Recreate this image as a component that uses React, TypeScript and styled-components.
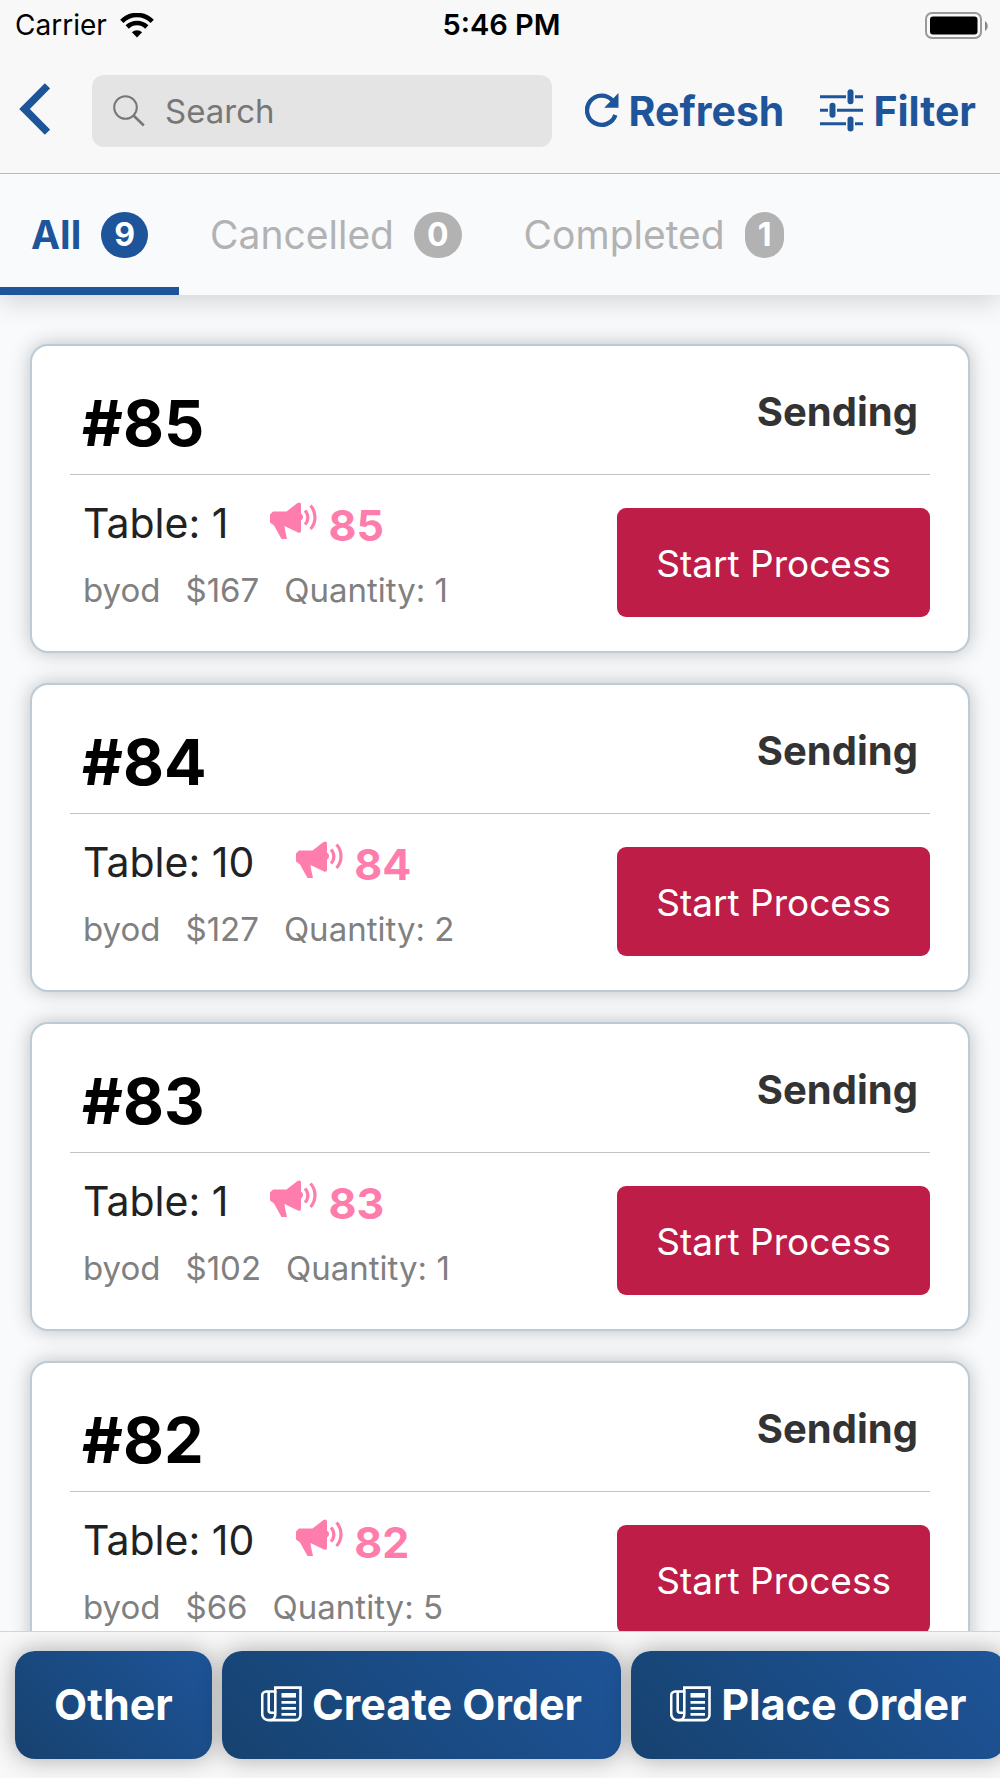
import React from "react";
import styled, { createGlobalStyle, css } from "styled-components";

const color = {
  brand: "#1e5499",
  crimson: "#bd1d46",
  pink: "#ff7dac",
  muted: "#b2b2b2",
  surface: "#f8f8f8",
  page: "#f8fafc",
};

const GlobalStyle = createGlobalStyle`
  *, *::before, *::after { box-sizing: border-box; }
  body {
    margin: 0;
    background: ${color.page};
    font-family: Inter, "Liberation Sans", sans-serif;
  }
  button, input { font: inherit; }
  button { border: 0; background: none; padding: 0; cursor: pointer; white-space: nowrap; }
  svg { display: block; flex: none; }
`;

const Screen = styled.div`
  display: flex;
  flex-direction: column;
  height: 100vh;
  overflow: hidden;
`;

const Header = styled.header`
  flex: none;
  background: ${color.surface};
  border-bottom: 1px solid #b9b9bb;
`;

const StatusBar = styled.div`
  display: grid;
  grid-template-columns: 1fr auto 1fr;
  align-items: center;
  height: 50px;
  padding: 0 12px 0 15px;
  font-size: 28px;
  line-height: 32px;
  color: #000;
`;

const Carrier = styled.div`
  display: flex;
  align-items: center;
  gap: 13px;
`;

const Clock = styled.time`
  font-size: 29px;
  font-weight: 600;
`;

const Battery = styled.div`
  justify-self: end;
`;

const Toolbar = styled.div`
  display: flex;
  align-items: center;
  gap: 33px;
  padding: 25px 24px 26px 19px;
`;

const Tools = styled.div`
  display: flex;
  gap: 36px;
`;

const BackButton = styled.button`
  margin: 0 9px 4px 0;
`;

const SearchBox = styled.label`
  display: flex;
  align-items: center;
  gap: 20px;
  flex: 1;
  min-width: 0;
  height: 72px;
  padding: 0 21px;
  border-radius: 12px;
  background: #e4e4e4;
  color: #777;
`;

const SearchInput = styled.input`
  flex: 1;
  min-width: 0;
  padding: 0;
  border: 0;
  outline: 0;
  background: transparent;
  font-size: 33px;
  line-height: 40px;
  color: #333;
  &::placeholder { color: #777; opacity: 1; }
`;

const ToolButton = styled.button`
  display: flex;
  align-items: center;
  gap: 10px;
  color: ${color.brand};
  font-size: 41px;
  line-height: 48px;
  font-weight: 700;
  svg { margin-bottom: 2px; }
`;

const Tabs = styled.nav`
  position: relative;
  z-index: 1;
  display: flex;
  flex: none;
  height: 121px;
  background: ${color.page};
  box-shadow: 0 8px 24px rgba(0, 0, 0, 0.14);
  clip-path: inset(0 0 -60px 0);
`;

const Tab = styled.button<{ $active?: boolean }>`
  display: flex;
  align-items: center;
  gap: 20px;
  padding: 8px 31px 0;
  border-bottom: 8px solid transparent;
  font-size: 39px;
  line-height: 46px;
  color: ${color.muted};
  ${(p) =>
    p.$active &&
    css`
      color: ${color.brand};
      font-weight: 700;
      border-bottom-color: ${color.brand};
    `}
`;

const Badge = styled.span<{ $active?: boolean }>`
  height: 46px;
  padding: 0 13px;
  border-radius: 23px;
  background: ${(p) => (p.$active ? color.brand : color.muted)};
  color: #fff;
  font-size: 32px;
  line-height: 46px;
  font-weight: 700;
`;

const OrderList = styled.main`
  display: flex;
  flex-direction: column;
  gap: 30px;
  flex: 1;
  min-height: 0;
  overflow: hidden;
  padding: 49px 30px 0;
`;

const Card = styled.article`
  flex: none;
  border: 2px solid #bccbd5;
  border-radius: 18px;
  background: #fff;
  box-shadow: 0 0 20px rgba(0, 0, 0, 0.24);
  padding: 0 38px;
`;

const CardHead = styled.div`
  display: flex;
  justify-content: space-between;
  align-items: flex-start;
  padding: 41px 12px 15px;
  border-bottom: 1px solid #c4c4c4;
`;

const OrderNumber = styled.h2`
  margin: 0;
  font-size: 63px;
  line-height: 72px;
  font-weight: 700;
  color: #000;
`;

const Status = styled.span`
  font-size: 40px;
  line-height: 50px;
  font-weight: 700;
  color: #333;
`;

const CardBody = styled.div`
  display: flex;
  justify-content: space-between;
  padding: 24px 0 34px 13px;
`;

const Details = styled.div`
  display: flex;
  flex-direction: column;
  gap: 22px;
`;

const TableLine = styled.div`
  display: flex;
  align-items: flex-start;
  gap: 42px;
  font-size: 41px;
  line-height: 48px;
  color: #222;
`;

const Call = styled.span`
  display: flex;
  gap: 11px;
  padding-top: 3px;
  font-size: 43px;
  line-height: 46px;
  font-weight: 700;
  color: ${color.pink};
`;

const MetaLine = styled.div`
  display: flex;
  gap: 25px;
  font-size: 33px;
  line-height: 40px;
  color: #808080;
`;

const ProcessButton = styled.button`
  flex: none;
  height: 109px;
  margin-top: 9px;
  padding: 2px 39px 0;
  border-radius: 9px;
  background: ${color.crimson};
  color: #fff;
  font-size: 37px;
  line-height: 46px;
`;

const ActionBar = styled.footer`
  display: flex;
  flex: none;
  gap: 10px;
  padding: 19px 15px;
  overflow: hidden;
  border-top: 1px solid #d4d4d6;
  background: ${color.surface};
`;

const ActionButton = styled.button`
  display: flex;
  align-items: center;
  flex: none;
  gap: 10px;
  height: 108px;
  padding: 0 39px 2px;
  border-radius: 20px;
  background: linear-gradient(45deg, #16426f, #1e5499);
  box-shadow: 0 0 24px rgba(0, 0, 0, 0.32);
  color: #fff;
  font-size: 43px;
  line-height: 48px;
  font-weight: 700;
`;

const WifiIcon = () => (
  <svg width="34" height="25" viewBox="0 0 34 25" fill="none" stroke="#000" aria-hidden="true">
    <path d="M1.8 8.3a21.5 21.5 0 0 1 30.4 0" strokeWidth="4.6" />
    <path d="M7.2 14a14 14 0 0 1 19.6 0" strokeWidth="4.6" />
    <path d="M17 24.5l-5.1-5.2a7.2 7.2 0 0 1 10.2 0z" fill="#000" stroke="none" />
  </svg>
);

const BatteryIcon = () => (
  <svg width="63" height="27" viewBox="0 0 63 27" aria-hidden="true">
    <rect x="1" y="1" width="55" height="25" rx="6" fill="none" stroke="#999" strokeWidth="2" />
    <rect x="5" y="4.5" width="47.5" height="18" rx="3" />
    <path d="M60 9c3.600 2 3.600 8 0 10z" fill="#888" />
  </svg>
);

const BackIcon = () => (
  <svg width="31" height="52" viewBox="0 0 31 52" fill="none" stroke={color.brand} strokeWidth="7.500" aria-hidden="true">
    <path d="M28.500 2.800 5.500 26l23 23.200" />
  </svg>
);

const SearchIcon = () => (
  <svg width="32" height="32" viewBox="0 0 32 32" fill="none" stroke="currentColor" strokeWidth="2" aria-hidden="true">
    <circle cx="12.500" cy="12.500" r="11.300" />
    <path d="M20 20l10.800 10.500" strokeWidth="2.600" />
  </svg>
);

const RefreshIcon = () => (
  <svg width="34" height="36" viewBox="0 0 34 36" fill="none" aria-hidden="true">
    <path d="M30.400 23A14.600 14.600 0 1 1 27.500 8.500" stroke="currentColor" strokeWidth="4.400" />
    <path d="M33.500 1v14.700H19.200z" fill="currentColor" />
  </svg>
);

const FilterIcon = () => (
  <svg width="43" height="43" viewBox="0 0 43 43" fill="currentColor" aria-hidden="true">
    <path d="M0 6.200h26v3H0zM35 6.200h8v3h-8zM0 19.700h8v3H0zM17 19.700h26v3H17zM0 33.200h26v3H0zM35 33.200h8v3h-8z" />
    <rect x="27.500" y="0.300" width="6" height="15" rx="3" />
    <rect x="9.500" y="13.800" width="6" height="15" rx="3" />
    <rect x="27.500" y="27.500" width="6" height="15" rx="3" />
  </svg>
);

const MegaphoneIcon = () => (
  <svg width="47" height="38" viewBox="0 0 47 38" fill="none" aria-hidden="true">
    <path
      fill="currentColor"
      d="M3 9.500h13.500L27.500 1Q31 -.5 31 2.500V11.500a4 4 0 0 1 0 7V29Q31 31.500 28 30.500L14.500 24c.5 5 1.500 8 2.500 13h-5.500L4 23.500 0 20.500V12.500z"
    />
    <path d="M35 8.500c3.800 4 3.800 10 0 14M40.500 3.500c6 6.500 6 17 0 23.500" stroke="currentColor" strokeWidth="3.200" />
  </svg>
);

const PaperIcon = () => (
  <svg width="41" height="36" viewBox="0 0 41 36" fill="none" stroke="#fff" strokeWidth="2.600" aria-hidden="true">
    <path d="M14.300 1.600h25.200v27.500a5 5 0 0 1-5 5H7.200a6 6 0 0 1-6-6V9.500a4 4 0 0 1 4-4h9.100z" />
    <path d="M14.300 5.500v22.600c0 3.600-2 6-4.800 6" />
    <path d="M7.700 5.500v18.800c0 2 1 2.500 2.600 2.500h4" />
    <path d="M20.500 9.300H35" strokeWidth="4.600" />
    <path d="M20.500 16.300H35M20.500 22.300H35M20.500 28.300H35" strokeWidth="2.800" />
  </svg>
);

const tabs = [
  { label: "All", count: 9, active: true },
  { label: "Cancelled", count: 0 },
  { label: "Completed", count: 1 },
];

const orders = [
  { id: 85, table: 1, price: 167, quantity: 1 },
  { id: 84, table: 10, price: 127, quantity: 2 },
  { id: 83, table: 1, price: 102, quantity: 1 },
  { id: 82, table: 10, price: 66, quantity: 5 },
];

export default function App() {
  return (
    <Screen>
      <GlobalStyle />
      <Header>
        <StatusBar>
          <Carrier>
            Carrier
            <WifiIcon />
          </Carrier>
          <Clock>5:46 PM</Clock>
          <Battery>
            <BatteryIcon />
          </Battery>
        </StatusBar>
        <Toolbar>
          <BackButton type="button" aria-label="Back">
            <BackIcon />
          </BackButton>
          <SearchBox>
            <SearchIcon />
            <SearchInput type="text" placeholder="Search" aria-label="Search" />
          </SearchBox>
          <Tools>
            <ToolButton type="button">
              <RefreshIcon />
              Refresh
            </ToolButton>
            <ToolButton type="button">
              <FilterIcon />
              Filter
            </ToolButton>
          </Tools>
        </Toolbar>
      </Header>

      <Tabs>
        {tabs.map((tab) => (
          <Tab key={tab.label} type="button" $active={tab.active}>
            {tab.label}
            <Badge $active={tab.active}>{tab.count}</Badge>
          </Tab>
        ))}
      </Tabs>

      <OrderList>
        {orders.map((order) => (
          <Card key={order.id}>
            <CardHead>
              <OrderNumber>#{order.id}</OrderNumber>
              <Status>Sending</Status>
            </CardHead>
            <CardBody>
              <Details>
                <TableLine>
                  <span>Table: {order.table}</span>
                  <Call>
                    <MegaphoneIcon />
                    {order.id}
                  </Call>
                </TableLine>
                <MetaLine>
                  <span>byod</span>
                  <span>${order.price}</span>
                  <span>Quantity: {order.quantity}</span>
                </MetaLine>
              </Details>
              <ProcessButton type="button">Start Process</ProcessButton>
            </CardBody>
          </Card>
        ))}
      </OrderList>

      <ActionBar>
        <ActionButton type="button">Other</ActionButton>
        <ActionButton type="button">
          <PaperIcon />
          Create Order
        </ActionButton>
        <ActionButton type="button">
          <PaperIcon />
          Place Order
        </ActionButton>
      </ActionBar>
    </Screen>
  );
}
